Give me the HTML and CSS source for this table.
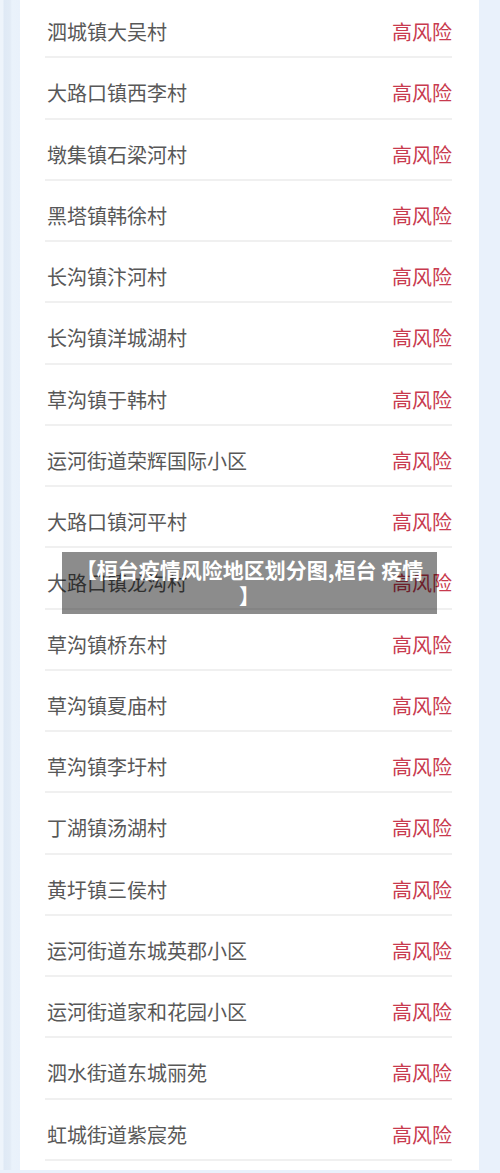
FILE: index.html
```html
<!DOCTYPE html>
<html lang="zh-CN">

<head>
  <meta charset="UTF-8">
  <meta name="viewport" content="width=device-width, initial-scale=1.0">
  <title>桓台疫情风险地区划分图</title>
  <link rel="stylesheet" href="styles.css">
</head>

<body>
  <div class="page">
    <div class="card">
      <ul class="area_list">
        <li class="row"><span class="name">泗城镇大吴村</span><span class="level">高风险</span></li>
        <li class="row"><span class="name">大路口镇西李村</span><span class="level">高风险</span></li>
        <li class="row"><span class="name">墩集镇石梁河村</span><span class="level">高风险</span></li>
        <li class="row"><span class="name">黑塔镇韩徐村</span><span class="level">高风险</span></li>
        <li class="row"><span class="name">长沟镇汴河村</span><span class="level">高风险</span></li>
        <li class="row"><span class="name">长沟镇洋城湖村</span><span class="level">高风险</span></li>
        <li class="row"><span class="name">草沟镇于韩村</span><span class="level">高风险</span></li>
        <li class="row"><span class="name">运河街道荣辉国际小区</span><span class="level">高风险</span></li>
        <li class="row"><span class="name">大路口镇河平村</span><span class="level">高风险</span></li>
        <li class="row"><span class="name">大路口镇龙沟村</span><span class="level">高风险</span></li>
        <li class="row"><span class="name">草沟镇桥东村</span><span class="level">高风险</span></li>
        <li class="row"><span class="name">草沟镇夏庙村</span><span class="level">高风险</span></li>
        <li class="row"><span class="name">草沟镇李圩村</span><span class="level">高风险</span></li>
        <li class="row"><span class="name">丁湖镇汤湖村</span><span class="level">高风险</span></li>
        <li class="row"><span class="name">黄圩镇三侯村</span><span class="level">高风险</span></li>
        <li class="row"><span class="name">运河街道东城英郡小区</span><span class="level">高风险</span></li>
        <li class="row"><span class="name">运河街道家和花园小区</span><span class="level">高风险</span></li>
        <li class="row"><span class="name">泗水街道东城丽苑</span><span class="level">高风险</span></li>
        <li class="row"><span class="name">虹城街道紫宸苑</span><span class="level">高风险</span></li>
      </ul>
    </div>
    <div class="caption">【桓台疫情风险地区划分图,桓台 疫情<br>】</div>
  </div>
</body>

</html>
```

FILE: styles.css
```css
html,
body {
  margin: 0;
  padding: 0;
}

body {
  background-color: #e9f1fb;
  font-family: "Noto Sans CJK SC", "Noto Sans", sans-serif;
  overflow: hidden;
}

.page {
  position: relative;
  height: 1173px;
  padding-left: 20px;
  padding-right: 21px;
  background: linear-gradient(90deg, #eef4fb 0, #eef4fb 3px, #dfe9f5 4px, #e2ebf6 10px, #eaf2fb 12px, #e9f1fb 20px);
}

.card {
  background-color: #fff;
  height: 100%;
  padding: 0 27px 0 25px;
}

.area_list {
  list-style: none;
  margin: -3px 0 0;
  padding: 0;
}

.area_list .row {
  box-sizing: border-box;
  height: 61.25px;
  padding: 11px 0 0 2px;
  border-bottom: 2px solid #f0f0f0;
  display: flex;
  align-items: center;
  justify-content: space-between;
  font-size: 20px;
  line-height: 24px;
}

.name {
  color: #585858;
}

.level {
  color: #c83a4e;
}

.caption {
  position: absolute;
  top: 555px;
  left: 62px;
  width: 375px;
  box-sizing: border-box;
  padding: 4px 6px 6px;
  background-color: rgba(0, 0, 0, 0.45);
  color: #fff;
  font-size: 21px;
  font-weight: bold;
  line-height: 26px;
  text-align: center;
}
```
